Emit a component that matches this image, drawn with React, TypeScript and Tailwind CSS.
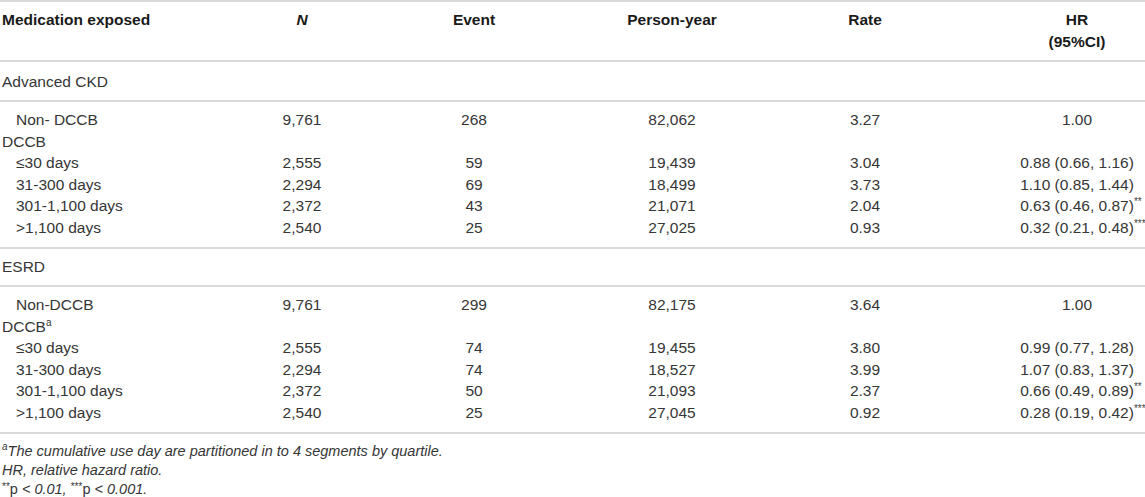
import React from "react";

const COLS = "grid grid-cols-[279px_46px_298px_98px_288px_136px]";

type Row = {
  label: React.ReactNode;
  indent?: boolean;
  n?: string;
  event?: string;
  py?: string;
  rate?: string;
  hr?: string;
  star?: string;
};

const Cell = ({ children }: { children?: React.ReactNode }) => (
  <div className="flex justify-center whitespace-nowrap">{children}</div>
);

function DataRow({ r }: { r: Row }) {
  return (
    <div className={COLS}>
      <div className={`whitespace-nowrap ${r.indent ? "pl-[16px]" : "pl-[2px]"}`}>{r.label}</div>
      <Cell>{r.n}</Cell>
      <Cell>{r.event}</Cell>
      <Cell>{r.py}</Cell>
      <Cell>{r.rate}</Cell>
      <Cell>
        {r.hr}
        {r.star ? (
          <span className="inline-block w-0 overflow-visible">
            <span className="text-[10px] leading-none align-top relative top-[2px] text-[#444]">{r.star}</span>
          </span>
        ) : null}
      </Cell>
    </div>
  );
}

const ckd: Row[] = [
  { label: "Non- DCCB", indent: true, n: "9,761", event: "268", py: "82,062", rate: "3.27", hr: "1.00" },
  { label: "DCCB" },
  { label: "≤30 days", indent: true, n: "2,555", event: "59", py: "19,439", rate: "3.04", hr: "0.88 (0.66, 1.16)" },
  { label: "31-300 days", indent: true, n: "2,294", event: "69", py: "18,499", rate: "3.73", hr: "1.10 (0.85, 1.44)" },
  { label: "301-1,100 days", indent: true, n: "2,372", event: "43", py: "21,071", rate: "2.04", hr: "0.63 (0.46, 0.87)", star: "**" },
  { label: ">1,100 days", indent: true, n: "2,540", event: "25", py: "27,025", rate: "0.93", hr: "0.32 (0.21, 0.48)", star: "***" },
];

const esrd: Row[] = [
  { label: "Non-DCCB", indent: true, n: "9,761", event: "299", py: "82,175", rate: "3.64", hr: "1.00" },
  {
    label: (
      <span>
        DCCB<sup className="text-[10px] top-[-6px]">a</sup>
      </span>
    ),
  },
  { label: "≤30 days", indent: true, n: "2,555", event: "74", py: "19,455", rate: "3.80", hr: "0.99 (0.77, 1.28)" },
  { label: "31-300 days", indent: true, n: "2,294", event: "74", py: "18,527", rate: "3.99", hr: "1.07 (0.83, 1.37)" },
  { label: "301-1,100 days", indent: true, n: "2,372", event: "50", py: "21,093", rate: "2.37", hr: "0.66 (0.49, 0.89)", star: "**" },
  { label: ">1,100 days", indent: true, n: "2,540", event: "25", py: "27,045", rate: "0.92", hr: "0.28 (0.19, 0.42)", star: "***" },
];

export default function App() {
  return (
    <div
      className="w-[1145px] h-[497px] bg-white text-[#363636] text-[15.5px] overflow-hidden"
      style={{ fontFamily: '"Liberation Sans", Arial, sans-serif' }}
    >
      {/* header */}
      <div className={`${COLS} border-t-2 border-b-2 border-[#d9d9d9] pt-[7px] pb-[7px] leading-[22px] font-bold text-[#1a1a1a]`}>
        <div className="pl-[2px] whitespace-nowrap">Medication exposed</div>
        <Cell>
          <span className="italic">N</span>
        </Cell>
        <Cell>Event</Cell>
        <Cell>Person-year</Cell>
        <Cell>Rate</Cell>
        <div className="text-center">
          HR
          <br />
          (95%CI)
        </div>
      </div>

      {/* Advanced CKD */}
      <div className="border-b-2 border-[#d9d9d9] pt-[9px] pb-[7px] leading-[22px] pl-[2px]">Advanced CKD</div>
      <div className="border-b-2 border-[#d9d9d9] pt-[7px] pb-[9px] leading-[21.5px]">
        {ckd.map((r, i) => (
          <DataRow key={i} r={r} />
        ))}
      </div>

      {/* ESRD */}
      <div className="border-b-2 border-[#d9d9d9] pt-[7px] pb-[7px] leading-[22px] pl-[2px]">ESRD</div>
      <div className="border-b-2 border-[#d9d9d9] pt-[7px] pb-[9px] leading-[21.5px]">
        {esrd.map((r, i) => (
          <DataRow key={i} r={r} />
        ))}
      </div>

      {/* footnotes */}
      <div className="pt-[8px] leading-[19px] text-[14.5px] italic pl-[2px]">
        <div>
          <sup className="text-[10px] top-[-6px]">a</sup>The cumulative use day are partitioned in to 4 segments by quartile.
        </div>
        <div>HR, relative hazard ratio.</div>
        <div>
          <span className="not-italic">
            <sup className="text-[10px] top-[-4px]">**</sup>p
          </span>{" "}
          &lt; 0.01,{" "}
          <span className="not-italic">
            <sup className="text-[10px] top-[-4px]">***</sup>p
          </span>{" "}
          &lt; 0.001.
        </div>
      </div>
    </div>
  );
}
